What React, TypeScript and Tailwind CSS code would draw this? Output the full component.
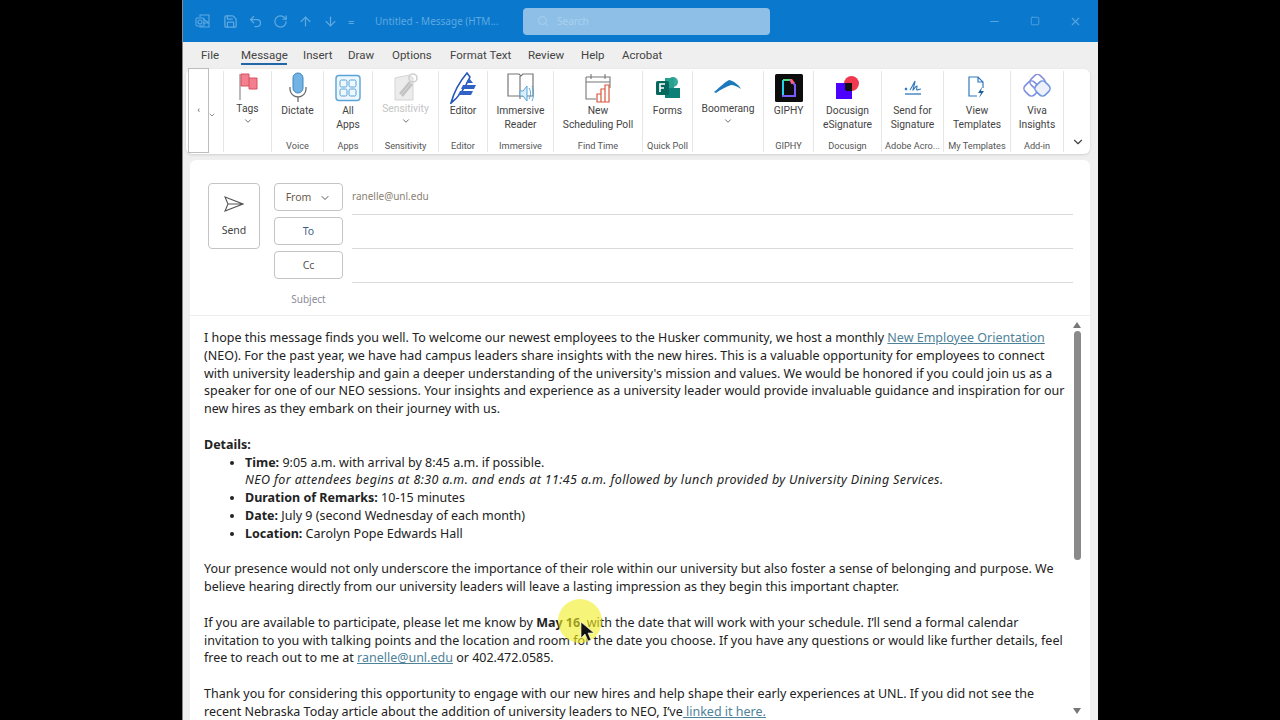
import { ArrowDown, ArrowUp, ChevronDown, Minus, RotateCw, Save, Search, Square, Undo2, X } from "lucide-react";
import type { ReactNode } from "react";

const Flag = () => (
  <svg width="20" height="28" viewBox="0 0 20 28">
    <path d="M2 1v26" stroke="#8a8a8a" strokeWidth="1.2" />
    <path d="M3 1h8v4h8v11h-8v-3H3z" fill="#f47f8e" stroke="#d9505f" strokeWidth="1" />
    <path d="M11 5v8" stroke="#d9505f" strokeWidth="1" />
  </svg>
);

const Mic = () => (
  <svg width="18" height="31" viewBox="0 0 18 31">
    <rect x="4" y="1" width="10" height="20" rx="5" fill="#72b3e3" stroke="#3f88c2" />
    <path d="M1 15v2a8 8 0 0 0 16 0v-2M9 25v5" fill="none" stroke="#6d6d6d" strokeWidth="1.3" />
  </svg>
);

const AppsIcon = () => (
  <svg width="26" height="28" viewBox="0 0 26 28">
    <rect x="1" y="1.5" width="24" height="25" rx="3" fill="#eef7fd" stroke="#58a4d8" strokeWidth="1.4" />
    <rect x="5" y="6" width="7" height="7" rx="1.5" fill="none" stroke="#58a4d8" />
    <rect x="14" y="6" width="7" height="7" rx="1.5" fill="none" stroke="#58a4d8" />
    <rect x="5" y="15" width="7" height="7" rx="1.5" fill="none" stroke="#58a4d8" />
    <rect x="14" y="15" width="7" height="7" rx="1.5" fill="none" stroke="#58a4d8" />
  </svg>
);

const SensitivityIcon = () => (
  <svg width="26" height="30" viewBox="0 0 26 30">
    <path d="M2 6l14-3 4 3v22H2z" fill="#ececec" stroke="#d4d4d4" />
    <path d="M7 22l10-12M9 24l10-12" stroke="#c2c2c2" strokeWidth="2.5" />
    <circle cx="20" cy="6" r="4" fill="none" stroke="#cfcfcf" strokeWidth="1.6" />
  </svg>
);

const EditorIcon = () => (
  <svg width="28" height="32" viewBox="0 0 28 32">
    <path d="M2 31C5 20 12 8 18 1l3 4C17 14 11 24 2 31z" fill="#fff" stroke="#2757b8" strokeWidth="1.6" />
    <path d="M14 13h13l-2 4H12zM11 19h13l-2 4H9zM20 6l4 5h-7z" fill="#2f62c4" />
  </svg>
);

const ReaderIcon = () => (
  <svg width="28" height="30" viewBox="0 0 28 30">
    <path d="M1 1h11l2 2 2-2h10v22H1zM13 3v23" fill="none" stroke="#777" strokeWidth="1.2" />
    <path d="M13 18h3l4-5v15l-4-5h-3z" fill="#d9eefa" stroke="#58a4d8" />
    <path d="M22 15c2 3 2 8 0 11M25 13c2 4 2 11 0 15" fill="none" stroke="#58a4d8" />
  </svg>
);

const PollIcon = () => (
  <svg width="26" height="30" viewBox="0 0 26 30">
    <path d="M1 4h24v11M1 4v22h10M1 9h24M6 1v5M20 1v5" fill="none" stroke="#777" strokeWidth="1.1" />
    <path d="M12 21h4v8h-4zM16 16h4v13h-4zM20 12h4v17h-4z" fill="#fff" stroke="#d9573f" strokeWidth="1.2" />
  </svg>
);

const FormsIcon = () => (
  <svg width="24" height="22" viewBox="0 0 24 22">
    <circle cx="17" cy="5" r="5" fill="#36a99b" />
    <rect x="9" y="1" width="9" height="10" fill="#28a08f" />
    <rect x="9" y="11" width="15" height="10" fill="#0c7f76" />
    <rect x="0" y="4" width="13" height="14" rx="1.5" fill="#06675f" />
    <path d="M4 15V7h5M4 11h4" stroke="#fff" strokeWidth="1.6" fill="none" />
  </svg>
);

const BoomerangIcon = () => (
  <svg width="28" height="14" viewBox="0 0 28 14">
    <path d="M0 12C6 7 11 2 15 0c5 1 10 5 12 9-3-2-7-4-10-4C11 7 6 10 2 13z" fill="#1b79bd" />
  </svg>
);

const GiphyIcon = () => (
  <svg width="28" height="28" viewBox="0 0 28 28">
    <rect width="28" height="28" rx="1.5" fill="#0d0d0d" />
    <path d="M8 6v16" stroke="#22d3ee" strokeWidth="2" />
    <path d="M8 6h8" stroke="#4ade80" strokeWidth="2" />
    <path d="M15 6l5 5v11H7" fill="none" stroke="#7c5cff" strokeWidth="2" />
    <path d="M15 5h2l3 4-4 1z" fill="#fb5f7e" />
  </svg>
);

const DocusignIcon = () => (
  <svg width="23" height="23" viewBox="0 0 23 23">
    <circle cx="15.5" cy="7.5" r="7.5" fill="#f0384f" />
    <rect x="0" y="7" width="16" height="16" fill="#4c00ff" />
    <path d="M9 7h7v8H11a2 2 0 0 1-2-2z" fill="#111" />
  </svg>
);

const SignIcon = () => (
  <svg width="18" height="18" viewBox="0 0 18 18">
    <path d="M1 9l2 2M3 9l-2 2M6 11c2-3 4-7 5-9 0 3-2 7-2 9 2-1 2-4 4-4 0 2-1 4 0 4s2-1 4-1" fill="none" stroke="#2f78bf" strokeWidth="1.1" />
    <path d="M1 15h16" stroke="#2f78bf" strokeWidth="1.3" />
  </svg>
);

const TemplateIcon = () => (
  <svg width="18" height="23" viewBox="0 0 18 23">
    <path d="M9 20H1V1h9l5 5v6M10 1v5h5" fill="none" stroke="#2f78bf" strokeWidth="1.2" />
    <path d="M14 11l-4 6h3l-2 5 5-7h-3z" fill="#1f5f99" />
  </svg>
);

const VivaIcon = () => (
  <svg width="28" height="28" viewBox="0 0 28 28">
    <rect x="8" y="1.5" width="13" height="13" rx="4" transform="rotate(45 14.5 8)" fill="none" stroke="#8a8fdc" strokeWidth="1.6" />
    <rect x="2" y="8" width="13" height="13" rx="4" transform="rotate(45 8.5 14.5)" fill="none" stroke="#7b8fe0" strokeWidth="1.6" />
    <rect x="13" y="8" width="13" height="13" rx="4" transform="rotate(45 19.5 14.5)" fill="#eef1fb" stroke="#6f97dd" strokeWidth="1.6" />
  </svg>
);

const OutlookIcon = () => (
  <svg className="mr-[3px]" width="15" height="15" viewBox="0 0 15 15" fill="none" stroke="currentColor" strokeWidth="1.1">
    <path d="M5 3V1h9v12H5v-1" />
    <path d="M8 5l6 4M8 9h6" />
    <rect x="1" y="4" width="8" height="8" rx="1" />
    <circle cx="5" cy="8" r="2" />
  </svg>
);

const Caret = () => <ChevronDown className="w-2.5 h-2.5 text-[#555]" strokeWidth={2} />;

interface GroupProps {
  width: string;
  icon: ReactNode;
  label: string[];
  group?: string;
  caret?: boolean;
  faded?: boolean;
}

// icon area is fixed height so the labels of every group line up
const Group = ({ width, icon, label, group, caret, faded }: GroupProps) => (
  <div className={`${width} h-[81px] flex flex-col items-center border-r border-[#e6e6e6] shrink-0`}>
    <div className={`${caret ? "h-[31px]" : "h-[33px]"} flex items-center justify-center`}>{icon}</div>
    <div className={`text-[10.3px] leading-[14px] text-center whitespace-nowrap ${faded ? "text-[#c4c4c4]" : "text-[#444]"}`}>
      {label.map((l) => (
        <div key={l}>{l}</div>
      ))}
    </div>
    {caret && <Caret />}
    <div className="mt-auto text-[9.2px] leading-[12px] text-[#555] whitespace-nowrap">{group}</div>
  </div>
);

const FieldButton = ({ children }: { children: ReactNode }) => (
  <div className="w-[69px] h-[28px] pt-[1px] border border-[#c4c4c4] rounded flex items-center justify-center gap-2 text-[10.5px] text-[#555]">
    {children}
  </div>
);

const FieldLine = ({ children }: { children?: ReactNode }) => (
  <div className="h-[34px] pb-[2px] border-b border-[#d9d9d9] flex items-center text-[10px] text-[#8a7f74]">{children}</div>
);

const Link = ({ children }: { children: ReactNode }) => (
  <span className="text-[#4d8299] underline">{children}</span>
);

const tabs = [
  ["File", "w-[40px]"],
  ["Message", "w-[62px]"],
  ["Insert", "w-[45px]"],
  ["Draw", "w-[44px]"],
  ["Options", "w-[58px]"],
  ["Format Text", "w-[78px]"],
  ["Review", "w-[53px]"],
  ["Help", "w-[41px]"],
  ["Acrobat", "w-[60px]"],
];

export default function App() {
  return (
    <div className="w-[1280px] h-[720px] bg-black flex justify-center overflow-hidden font-['Noto_Sans',sans-serif]">
      <div className="w-[916px] h-[720px] bg-[#efefef] flex flex-col relative border-l border-[#8a8a8a]">
        {/* title bar */}
        <div className="h-[42px] bg-[#0a78cc] flex items-center shrink-0 text-[#5ea9e2]">
          <div className="flex items-center gap-[10px] ml-[12px] w-[180px]">
            <OutlookIcon />
            <Save className="w-[15px] h-[15px]" />
            <Undo2 className="w-[15px] h-[15px]" />
            <RotateCw className="w-[15px] h-[15px]" />
            <ArrowUp className="w-[15px] h-[15px]" />
            <ArrowDown className="w-[15px] h-[15px]" />
            <span className="text-[11px] leading-none">=</span>
          </div>
          <div className="text-[10px] w-[148px] whitespace-nowrap">Untitled - Message (HTM...</div>
          <div className="w-[247px] h-[27px] bg-[#8ec0e7] rounded-sm flex items-center pl-[14px] gap-2 text-[#a8d0ee] text-[10px]">
            <Search className="w-3 h-3" />
            Search
          </div>
          <div className="ml-auto flex items-center gap-[29px] mr-[16px] text-[#58a6e0]">
            <Minus className="w-[13px] h-[13px]" />
            <Square className="w-[10px] h-[10px]" />
            <X className="w-[13px] h-[13px]" />
          </div>
        </div>

        {/* tabs */}
        <div className="h-[27px] pt-[1px] flex items-center pl-[18px] font-['Roboto',sans-serif] text-[11.5px] text-[#444] shrink-0">
          {tabs.map(([name, w]) => (
            <div key={name} className={`${w} whitespace-nowrap relative`}>
              {name}
              {name === "Message" && <div className="absolute left-0 top-[16px] w-[46px] h-[2px] bg-[#2067a8]" />}
            </div>
          ))}
        </div>

        {/* ribbon */}
        <div className="h-[85px] bg-white rounded-md mx-[3px] mr-[8px] flex items-start pt-[2px] shrink-0 shadow-sm relative font-['Roboto',sans-serif]">
          <div className="w-[21px] h-[85px] -mt-[3px] ml-[2px] border border-[#bdbdbd] bg-white text-[9px] text-[#555] flex items-center justify-center shrink-0">
            ‹
          </div>
          <div className="w-[15px] h-[81px] border-r border-[#e6e6e6] shrink-0 flex items-center">
            <ChevronDown className="w-2 h-2 text-[#555] -ml-[1px] mt-[6px]" />
          </div>
          <Group width="w-[48px]" icon={<Flag />} label={["Tags"]} caret />
          <Group width="w-[52px]" icon={<Mic />} label={["Dictate"]} group="Voice" />
          <Group width="w-[49px]" icon={<AppsIcon />} label={["All", "Apps"]} group="Apps" />
          <Group width="w-[66px]" icon={<SensitivityIcon />} label={["Sensitivity"]} group="Sensitivity" caret faded />
          <Group width="w-[49px]" icon={<EditorIcon />} label={["Editor"]} group="Editor" />
          <Group width="w-[66px]" icon={<ReaderIcon />} label={["Immersive", "Reader"]} group="Immersive" />
          <Group width="w-[89px]" icon={<PollIcon />} label={["New", "Scheduling Poll"]} group="Find Time" />
          <Group width="w-[50px]" icon={<FormsIcon />} label={["Forms"]} group="Quick Poll" />
          <Group width="w-[71px]" icon={<BoomerangIcon />} label={["Boomerang"]} caret />
          <Group width="w-[50px]" icon={<GiphyIcon />} label={["GIPHY"]} group="GIPHY" />
          <Group width="w-[68px]" icon={<DocusignIcon />} label={["Docusign", "eSignature"]} group="Docusign" />
          <Group width="w-[62px]" icon={<SignIcon />} label={["Send for", "Signature"]} group="Adobe Acro..." />
          <Group width="w-[67px]" icon={<TemplateIcon />} label={["View", "Templates"]} group="My Templates" />
          <Group width="w-[53px]" icon={<VivaIcon />} label={["Viva", "Insights"]} group="Add-in" />
          <ChevronDown className="w-3.5 h-3.5 text-[#444] ml-[7px] mt-[64px]" />
        </div>

        {/* compose card */}
        <div className="flex-1 min-h-0 bg-white rounded-t-md mt-[6px] ml-[7px] mr-[8px] flex flex-col overflow-hidden">
          <div className="h-[156px] flex pl-[18px] pt-[23px] pr-[17px] border-b border-[#eeeeee] shrink-0">
            <div className="w-[52px] h-[66px] border border-[#c4c4c4] rounded flex flex-col items-center justify-center gap-[11px] pt-[2px] text-[10.5px] text-[#444] shrink-0">
              <svg width="20" height="16" viewBox="0 0 20 16">
                <path d="M1 1l18 7-18 7 3-7zM4 8h15" fill="none" stroke="#555" strokeWidth="1.1" />
              </svg>
              Send
            </div>
            <div className="w-[69px] ml-[14px] flex flex-col gap-[6px] shrink-0">
              <FieldButton>
                <span className="text-[#6b5a48]">From</span>
                <ChevronDown className="w-3 h-3" />
              </FieldButton>
              <FieldButton>
                <span className="text-[#3f5f8a]">To</span>
              </FieldButton>
              <FieldButton>Cc</FieldButton>
              <div className="text-[10px] text-[#8b8b9a] text-center mt-[7px]">Subject</div>
            </div>
            <div className="flex-1 ml-[9px] flex flex-col -mt-[2px]">
              <FieldLine>ranelle@unl.edu</FieldLine>
              <FieldLine />
              <FieldLine />
            </div>
          </div>

          <div className="flex-1 min-h-0 flex relative">
            <div className="w-[878px] pl-[14px] pt-[13px] text-[12.5px] leading-[17.8px] text-[#222] whitespace-nowrap">
              <p>
                I hope this message finds you well. To welcome our newest employees to the Husker community, we host a monthly <Link>New Employee Orientation</Link>
                <br />
                (NEO). For the past year, we have had campus leaders share insights with the new hires. This is a valuable opportunity for employees to connect
                <br />
                with university leadership and gain a deeper understanding of the university's mission and values. We would be honored if you could join us as a
                <br />
                speaker for one of our NEO sessions. Your insights and experience as a university leader would provide invaluable guidance and inspiration for our
                <br />
                new hires as they embark on their journey with us.
              </p>
              <p className="mt-[17.8px] font-bold">Details:</p>
              <ul className="list-disc pl-[41px]">
                <li>
                  <b>Time:</b> 9:05 a.m. with arrival by 8:45 a.m. if possible.
                  <br />
                  <i className="tracking-[0.36px]">NEO for attendees begins at 8:30 a.m. and ends at 11:45 a.m. followed by lunch provided by University Dining Services.</i>
                </li>
                <li>
                  <b>Duration of Remarks:</b> 10-15 minutes
                </li>
                <li>
                  <b>Date:</b> July 9 (second Wednesday of each month)
                </li>
                <li>
                  <b>Location:</b> Carolyn Pope Edwards Hall
                </li>
              </ul>
              <p className="mt-[17.8px]">
                Your presence would not only underscore the importance of their role within our university but also foster a sense of belonging and purpose. We
                <br />
                believe hearing directly from our university leaders will leave a lasting impression as they begin this important chapter.
              </p>
              <p className="mt-[17.8px]">
                If you are available to participate, please let me know by <b>May 16</b>, with the date that will work with your schedule. I’ll send a formal calendar
                <br />
                invitation to you with talking points and the location and room for the date you choose. If you have any questions or would like further details, feel
                <br />
                free to reach out to me at <Link>ranelle@unl.edu</Link> or 402.472.0585.
              </p>
              <p className="mt-[17.8px]">
                Thank you for considering this opportunity to engage with our new hires and help shape their early experiences at UNL. If you did not see the
                <br />
                recent Nebraska Today article about the addition of university leaders to NEO, I’ve<Link> linked it here.</Link>
              </p>
            </div>
            {/* scrollbar */}
            <div className="w-[10px] ml-auto mr-[8px] flex flex-col items-center pt-[6px] pb-[6px]">
              <div className="w-0 h-0 border-x-[4px] border-x-transparent border-b-[6px] border-b-[#777]" />
              <div className="w-[7px] h-[229px] mt-[3px] bg-[#8a8a8a] rounded-full" />
              <div className="mt-auto w-0 h-0 border-x-[4px] border-x-transparent border-t-[6px] border-t-[#777]" />
            </div>
          </div>
        </div>

        {/* cursor highlight */}
        <div className="absolute left-[375px] top-[599px] w-[44px] h-[44px] rounded-full bg-[#f2ee20]/60" />
        <svg className="absolute left-[397px] top-[621px]" width="15" height="22" viewBox="0 0 15 22">
          <path d="M1 1v16l4-4 3 7 3-1-3-7h6z" fill="#111" stroke="#fff" strokeWidth="0.6" />
        </svg>
      </div>
    </div>
  );
}
